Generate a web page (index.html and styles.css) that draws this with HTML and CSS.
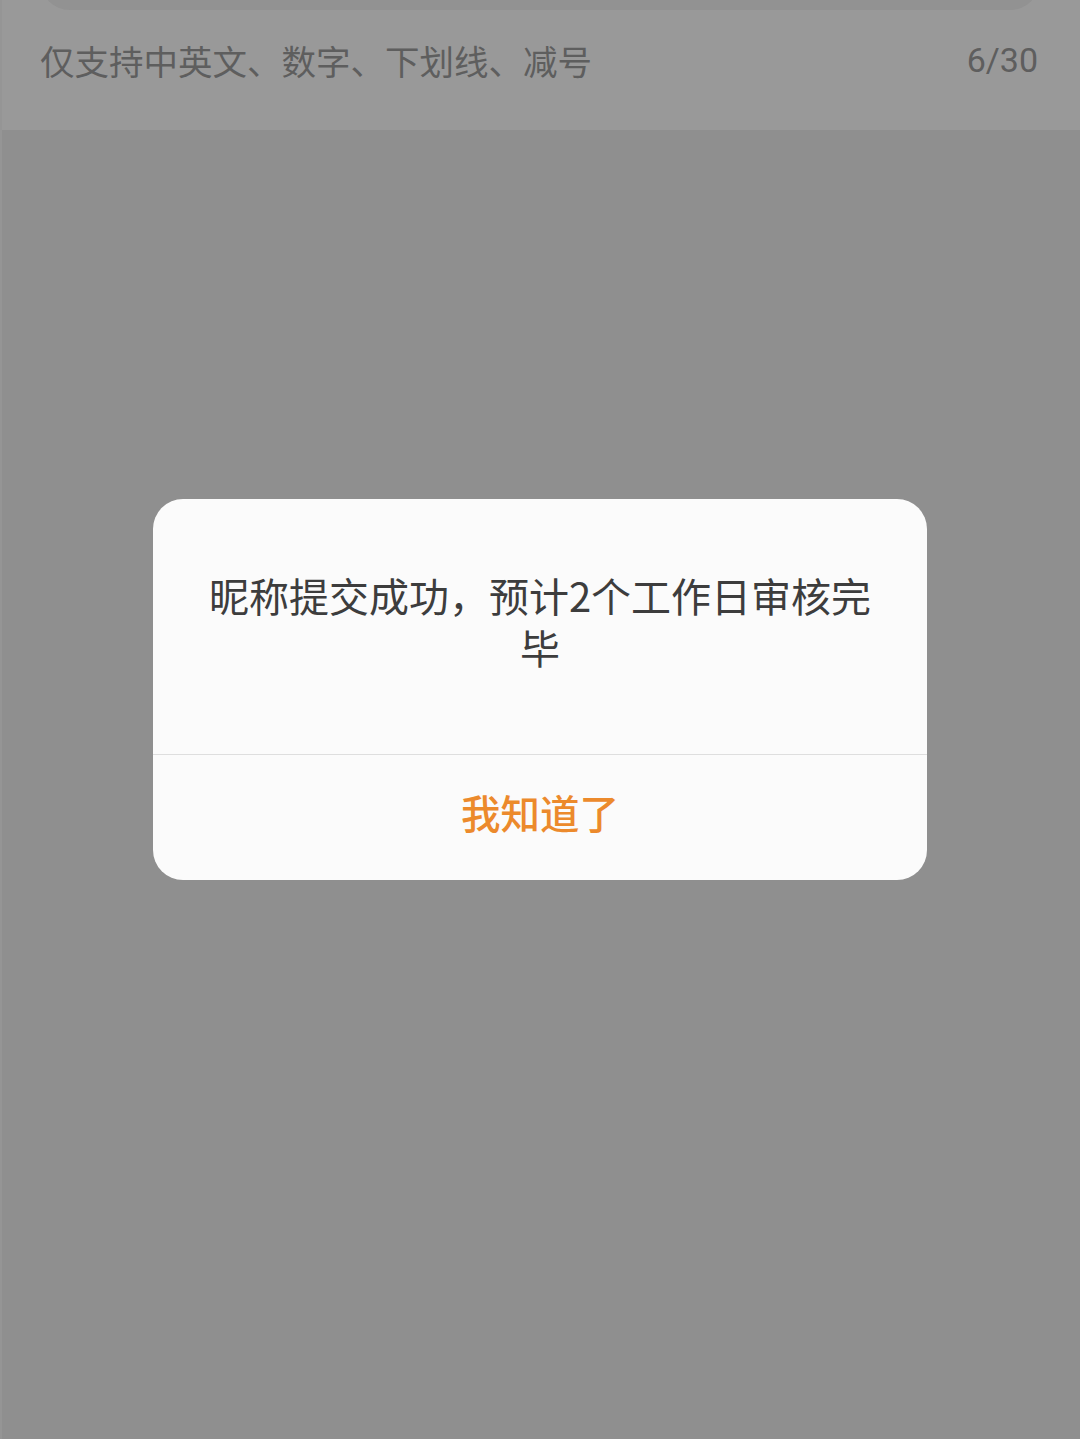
FILE: index.html
```html
<!DOCTYPE html>
<html lang="zh-CN">
<head>
<meta charset="utf-8">
<title>昵称</title>
<link rel="stylesheet" href="styles.css">
</head>
<body>
<div class="page">
  <header class="top">
    <div class="input-box"></div>
    <div class="hint-row">
      <span class="hint">仅支持中英文、数字、下划线、减号</span>
      <span class="count">6/30</span>
    </div>
  </header>
  <div class="dialog">
    <div class="message">昵称提交成功，预计2个工作日审核完毕</div>
    <div class="actions">
      <button class="ok">我知道了</button>
    </div>
  </div>
</div>
</body>
</html>
```

FILE: styles.css
```css
html, body {
  margin: 0;
  padding: 0;
}
body {
  width: 1080px;
  height: 1439px;
  background: #8f8f8f;
  font-family: "Noto Sans CJK SC", "Noto Sans", sans-serif;
  overflow: hidden;
}
.page {
  display: flex;
  flex-direction: column;
  align-items: center;
  border-left: 2px solid #959595;
  min-height: 1439px;
  box-sizing: border-box;
}
.top {
  align-self: stretch;
  height: 130px;
  background: #999999;
  display: flex;
  flex-direction: column;
}
.input-box {
  height: 40px;
  margin: -30px 40px 0 38px;
  background: #929292;
  border-radius: 0 0 30px 30px;
}
.hint-row {
  display: flex;
  justify-content: space-between;
  align-items: center;
  padding: 0 42px 0 38px;
  margin-top: 27px;
  height: 46px;
}
.hint {
  font-size: 34.5px;
  color: #5e5e5e;
}
.count {
  font-size: 34px;
  color: #5e5e5e;
  font-family: "Roboto", "Noto Sans", sans-serif;
}
.dialog {
  margin-top: 369px;
  margin-left: -2px;
  width: 774px;
  height: 381px;
  background: #fbfbfb;
  border-radius: 30px;
  display: flex;
  flex-direction: column;
  overflow: hidden;
}
.message {
  height: 256px;
  box-sizing: border-box;
  padding: 70px 46px 0;
  text-align: center;
  font-size: 40px;
  line-height: 52px;
  color: #3d3d3d;
  border-bottom: 1px solid #dedede;
}
.actions {
  flex: 1;
  display: flex;
  align-items: center;
  justify-content: center;
}
.ok {
  border: none;
  background: none;
  font-family: "Noto Sans CJK SC", "Noto Sans", sans-serif;
  font-size: 39.5px;
  font-weight: 500;
  color: #ec8a2c;
  padding: 0;
  margin-top: -12px;
}
```
